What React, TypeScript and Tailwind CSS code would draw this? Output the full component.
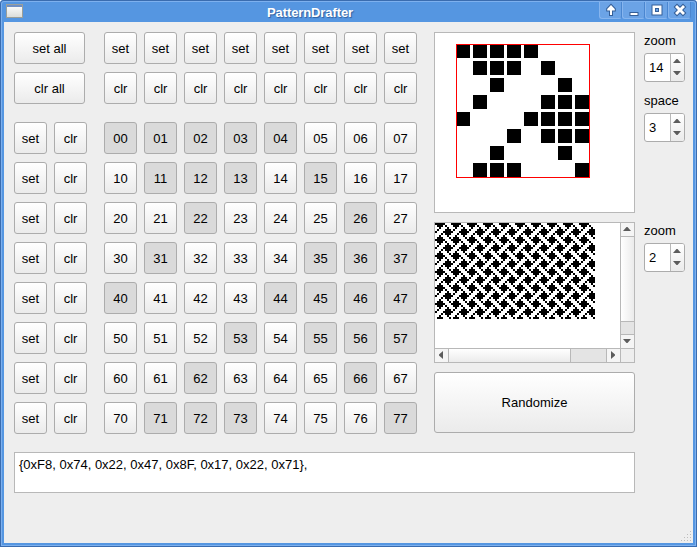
import React from "react";

const pattern = [0xf8, 0x74, 0x22, 0x47, 0x8f, 0x17, 0x22, 0x71];
const indexes = [0, 1, 2, 3, 4, 5, 6, 7];
const isSet = (row: number, col: number) => ((pattern[row] >> (7 - col)) & 1) === 1;

function tiledPath(columns: number, rows: number, zoom: number) {
  let d = "";
  for (let y = 0; y < rows; y++) {
    for (let x = 0; x < columns; x++) {
      if (isSet(y % 8, x % 8)) d += `M${x * zoom} ${y * zoom}h${zoom}v${zoom}h-${zoom}z`;
    }
  }
  return d;
}

function Button({ children, className = "w-[33px]", down = false }: { children: React.ReactNode; className?: string; down?: boolean }) {
  return (
    <button
      className={`flex h-8 shrink-0 items-center justify-center rounded-[3px] border border-[#acacac] pt-px ${
        down ? "bg-[#dadada]" : "bg-linear-to-b from-white to-[#ebebeb]"
      } ${className}`}
    >
      {children}
    </button>
  );
}

function Arrow({ dir }: { dir: "up" | "down" | "left" | "right" }) {
  const points = {
    up: "0,4 3.500,0 4.500,0 8,4",
    down: "0,0 3.500,4 4.500,4 8,0",
    left: "4,0 0,3.500 0,4.500 4,8",
    right: "0,0 4,3.500 4,4.500 0,8",
  }[dir];
  const vertical = dir === "up" || dir === "down";
  return (
    <svg width={vertical ? 8 : 4} height={vertical ? 4 : 8} className="block shrink-0">
      <polygon points={points} fill="#5c5c5c" />
    </svg>
  );
}

function SpinBox({ label, value }: { label: string; value: number }) {
  return (
    <label className="block">
      <span className="block h-[21px] leading-[18px]">{label}</span>
      <span className="flex h-[29px] w-[41px] overflow-hidden rounded-[3px] border border-[#acacac] bg-white">
        <span className="w-[25px] pl-1 leading-[28px]">{value}</span>
        <span className="flex flex-1 flex-col items-center gap-[8px] border-l border-[#b8b8b8] bg-linear-to-b from-white to-[#ebebeb] pt-[5px] pr-px">
          <Arrow dir="up" />
          <Arrow dir="down" />
        </span>
      </span>
    </label>
  );
}

function TitleBar() {
  const icons = [
    <path key="u" d="M6 12V7.5H3.2V6L7 2l3.8 4v1.5H8V12Z" />,
    <path key="m" d="M3.5 10h7v2h-7z" />,
    <path key="x" fillRule="evenodd" d="M2.500 2.500h9v9h-9zM5 5v4h4V5z" />,
    <path key="c" d="M2 4 4 2l3 3 3-3 2 2-3 3 3 3-2 2-3-3-3 3-2-2 3-3Z" />,
  ];
  return (
    <header className="flex h-[22px] shrink-0 items-start">
      <div className="mt-1 ml-[6px] h-[14px] w-[17px] border border-[#9b9f9a] bg-linear-to-b from-white to-[#dddeda]">
        <div className="h-[2px] bg-[#6f8fc4]" />
      </div>
      <h1 className="flex-1 pt-[3px] pr-[2px] text-center font-bold leading-[20px] tracking-[-0.1px] text-white [text-shadow:1px_1px_1px_#2f5f9f]">
        PatternDrafter
      </h1>
      <div className="mt-[2px] mr-[6px] flex">
        {icons.map((icon, i) => (
          <div key={i} className="flex h-[17px] w-[23px] items-center justify-center rounded-b-[3px] border-r border-b border-l border-r-[#4a86d0] border-b-[#87b5ee] border-l-[#87b5ee] bg-[#6ba3e6]">
            <svg width="14" height="14" fill="white" stroke="#355f98" strokeWidth="2" paintOrder="stroke">{icon}</svg>
          </div>
        ))}
      </div>
    </header>
  );
}

function PatternCanvas() {
  return (
    <div className="h-[181px] w-[201px] border border-[#b8b8b8] bg-white pt-[11px] pl-[21px]">
      <svg width="134" height="134" shapeRendering="crispEdges" className="block">
        {indexes.map((r) => indexes.map((c) => isSet(r, c) && <rect key={`${r}${c}`} x={c * 17} y={r * 17} width="14" height="14" />))}
        <rect x="0.5" y="0.5" width="133" height="133" fill="none" stroke="#ff0000" />
      </svg>
    </div>
  );
}

function Preview() {
  return (
    <div className="grid h-[141px] w-[201px] grid-cols-[185px_14px] grid-rows-[125px_14px] border border-[#b8b8b8] bg-white">
      <svg width="160" height="96" shapeRendering="crispEdges" className="block">
        <path d={tiledPath(80, 48, 2)} />
      </svg>
      <div className="flex flex-col border-l border-[#b8b8b8] bg-[#e4e4e4]">
        <div className="flex h-[14px] items-center justify-center border-b border-[#b8b8b8] bg-[#f5f5f5] pr-px pb-px"><Arrow dir="up" /></div>
        <div className="h-[85px] border-b border-[#b8b8b8] bg-linear-to-r from-white to-[#ebebeb]" />
        <div className="flex-1" />
        <div className="flex h-[14px] items-center justify-center border-t border-[#b8b8b8] bg-[#f5f5f5] pr-px pb-px"><Arrow dir="down" /></div>
      </div>
      <div className="flex border-t border-[#b8b8b8] bg-[#e4e4e4]">
        <div className="flex w-[14px] items-center justify-center border-r border-[#b8b8b8] bg-[#f5f5f5] pr-px pb-px"><Arrow dir="left" /></div>
        <div className="w-[122px] border-r border-[#b8b8b8] bg-linear-to-b from-white to-[#ebebeb]" />
        <div className="flex-1" />
        <div className="flex w-[14px] items-center justify-center border-l border-[#b8b8b8] bg-[#f5f5f5] pr-px pb-px"><Arrow dir="right" /></div>
      </div>
      <div className="border-t border-l border-[#b8b8b8] bg-[#eeeeee]" />
    </div>
  );
}

export default function App() {
  return (
    <div className="flex h-[547px] w-[697px] flex-col overflow-hidden rounded-t-[4px] bg-[#5596e1] font-['Liberation_Sans',Arial,sans-serif] text-[13px] text-black shadow-[inset_0_0_0_1px_#3a6caf,inset_0_0_0_2px_#7db0ee]">
      <TitleBar />
      <main className="relative mx-1 mb-1 flex-1 bg-[#eeeeee] px-[10px] pt-[10px]">
        <div className="flex">
          <div className="w-[403px]">
            {["set", "clr"].map((action) => (
              <div key={action} className="mb-2 flex gap-[7px]">
                <Button className="mr-3 w-[71px]">{action} all</Button>
                {indexes.map((c) => <Button key={c}>{action}</Button>)}
              </div>
            ))}
            <div className="mt-[18px] flex flex-col gap-2">
              {indexes.map((r) => (
                <div key={r} className="flex gap-[7px]">
                  <Button>set</Button>
                  <Button className="mr-[10px] w-[33px]">clr</Button>
                  {indexes.map((c) => <Button key={c} down={isSet(r, c)}>{r}{c}</Button>)}
                </div>
              ))}
            </div>
          </div>
          <div className="ml-[17px] flex w-[201px] flex-col">
            <PatternCanvas />
            <div className="mt-[9px]"><Preview /></div>
            <button className="mt-[9px] h-[61px] rounded-[3px] border border-[#acacac] bg-linear-to-b from-white to-[#ebebeb]">Randomize</button>
          </div>
          <div className="ml-[9px]">
            <SpinBox label="zoom" value={14} />
            <div className="mt-[10px]"><SpinBox label="space" value={3} /></div>
            <div className="mt-[80px]"><SpinBox label="zoom" value={2} /></div>
          </div>
        </div>
        <div className="mt-[18px] h-[41px] w-[621px] border border-[#b8b8b8] bg-white pt-[2px] pl-1 leading-[20px]">
          {"{0xF8, 0x74, 0x22, 0x47, 0x8F, 0x17, 0x22, 0x71},"}
        </div>
        <svg width="12" height="12" fill="#bdbdbd" className="absolute right-0 bottom-0">
          {[0, 1, 2, 3].map((r) => [0, 1, 2, 3].map((c) => c + r >= 3 && <rect key={`${r}${c}`} x={c * 3} y={r * 3} width="1" height="1" />))}
        </svg>
      </main>
    </div>
  );
}
